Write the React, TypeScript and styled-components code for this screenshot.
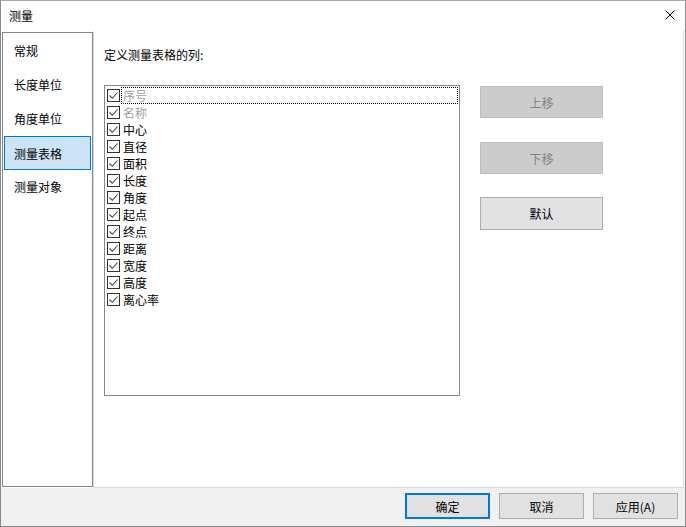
import React from "react";
import styled, { createGlobalStyle } from "styled-components";

const Global = createGlobalStyle`
  html, body { margin: 0; padding: 0; background: #fff; }
  * { box-sizing: border-box; }
  body { font-family: "Noto Sans CJK SC", "Noto Sans", sans-serif; font-size: 12px; color: #000; }
`;

const Window = styled.div`
  width: 686px;
  height: 527px;
  border: 1px solid #8a8a8a;
  border-top-color: #a8a8a8;
  background: #fff;
  display: flex;
  flex-direction: column;
`;

const TitleBar = styled.div`
  height: 30px;
  flex: none;
  display: flex;
  align-items: center;
  justify-content: space-between;
  padding: 0 10px 0 8px;
`;

const Title = styled.span`
  font-size: 12px;
  line-height: 16px;
`;

const CloseBtn = styled.svg`
  width: 10px;
  height: 10px;
  margin-top: -2px;
`;

const Body = styled.div`
  height: 457px;
  flex: none;
  display: flex;
  align-items: flex-start;
`;

const Sidebar = styled.div`
  margin: 1px 0 0 1px;
  width: 91px;
  height: 455px;
  border: 1px solid #828790;
  display: flex;
  flex-direction: column;
  padding: 0 1px;
`;

const NavItem = styled.div<{ $active?: boolean }>`
  height: 34px;
  display: flex;
  align-items: center;
  padding-left: 9px;
  margin-top: ${(p) => (p.$active ? "1px" : "0")};
  margin-bottom: ${(p) => (p.$active ? "-1px" : "0")};
  border: 1px solid ${(p) => (p.$active ? "#0078d7" : "transparent")};
  background: ${(p) => (p.$active ? "#cce4f7" : "transparent")};
  white-space: nowrap;
`;

const Main = styled.div`
  width: 591px;
  height: 457px;
  border: 1px solid #dadada;
  border-top: none;
  padding: 15px 0 0 10px;
  display: flex;
  flex-direction: column;
`;

const Label = styled.div`
  height: 18px;
  line-height: 18px;
`;

const Row = styled.div`
  margin-top: 21px;
  display: flex;
  align-items: flex-start;
`;

const ListBox = styled.div`
  width: 356px;
  height: 311px;
  border: 1px solid #828790;
  padding: 1px 1px 0 0;
  display: flex;
  flex-direction: column;
`;

const ListItem = styled.div<{ $disabled?: boolean }>`
  height: 17px;
  display: flex;
  align-items: center;
  padding-left: 2px;
  color: ${(p) => (p.$disabled ? "#a0a0a0" : "#000")};
`;

const Box = styled.span`
  width: 13px;
  height: 13px;
  flex: none;
  border: 1px solid #333;
  background: #fff;
  display: flex;
  align-items: center;
  justify-content: center;
`;

const ItemText = styled.span<{ $focus?: boolean }>`
  margin-left: 1px;
  padding-left: 1px;
  flex: 1;
  height: 17px;
  line-height: 16px;
  border: 1px dotted ${(p) => (p.$focus ? "#000" : "transparent")};
  border-left-width: 1px;
  white-space: nowrap;
`;

const SideButtons = styled.div`
  margin-left: 20px;
  margin-top: 1px;
  display: flex;
  flex-direction: column;
  gap: 24px;
`;

const Btn = styled.button<{ $disabled?: boolean; $primary?: boolean; $w?: number; $h?: number }>`
  width: ${(p) => p.$w ?? 85}px;
  height: ${(p) => p.$h ?? 26}px;
  font-family: "Noto Sans CJK SC", "Noto Sans", sans-serif;
  font-size: 12px;
  padding: 0;
  background: ${(p) => (p.$disabled ? "#cccccc" : "#e1e1e1")};
  color: ${(p) => (p.$disabled ? "#838383" : "#000")};
  border: ${(p) =>
    p.$primary ? "2px solid #0078d7" : p.$disabled ? "1px solid #bfbfbf" : "1px solid #adadad"};
  display: flex;
  align-items: center;
  justify-content: center;
`;

const Footer = styled.div`
  flex: 1;
  background: #f0f0f0;
  display: flex;
  justify-content: flex-end;
  align-items: flex-start;
  padding: 5px 7px 0 0;
  gap: 9px;
`;

const Check = () => (
  <svg width="11" height="11" viewBox="0 0 11 11">
    <polyline points="1.5,5.5 4.3,8.3 9.5,2.5" fill="none" stroke="#444" strokeWidth="1.1" />
  </svg>
);

const nav = ["常规", "长度单位", "角度单位", "测量表格", "测量对象"];
const cols = ["序号", "名称", "中心", "直径", "面积", "长度", "角度", "起点", "终点", "距离", "宽度", "高度", "离心率"];

export default function App() {
  return (
    <>
      <Global />
      <Window>
        <TitleBar>
          <Title>测量</Title>
          <CloseBtn viewBox="0 0 10 10">
            <path d="M0.5 0.5 L9.5 9.5 M9.5 0.5 L0.5 9.5" stroke="#000" strokeWidth="1" fill="none" />
          </CloseBtn>
        </TitleBar>
        <Body>
          <Sidebar>
            {nav.map((n) => (
              <NavItem key={n} $active={n === "测量表格"}>
                {n}
              </NavItem>
            ))}
          </Sidebar>
          <Main>
            <Label>定义测量表格的列:</Label>
            <Row>
              <ListBox>
                {cols.map((c, i) => (
                  <ListItem key={c} $disabled={i < 2}>
                    <Box>
                      <Check />
                    </Box>
                    <ItemText $focus={i === 0}>{c}</ItemText>
                  </ListItem>
                ))}
              </ListBox>
              <SideButtons>
                <Btn $disabled $w={123} $h={32}>上移</Btn>
                <Btn $disabled $w={123} $h={32}>下移</Btn>
                <Btn $w={123} $h={33} style={{ marginTop: -1 }}>默认</Btn>
              </SideButtons>
            </Row>
          </Main>
        </Body>
        <Footer>
          <Btn $primary>确定</Btn>
          <Btn>取消</Btn>
          <Btn>应用(A)</Btn>
        </Footer>
      </Window>
    </>
  );
}
